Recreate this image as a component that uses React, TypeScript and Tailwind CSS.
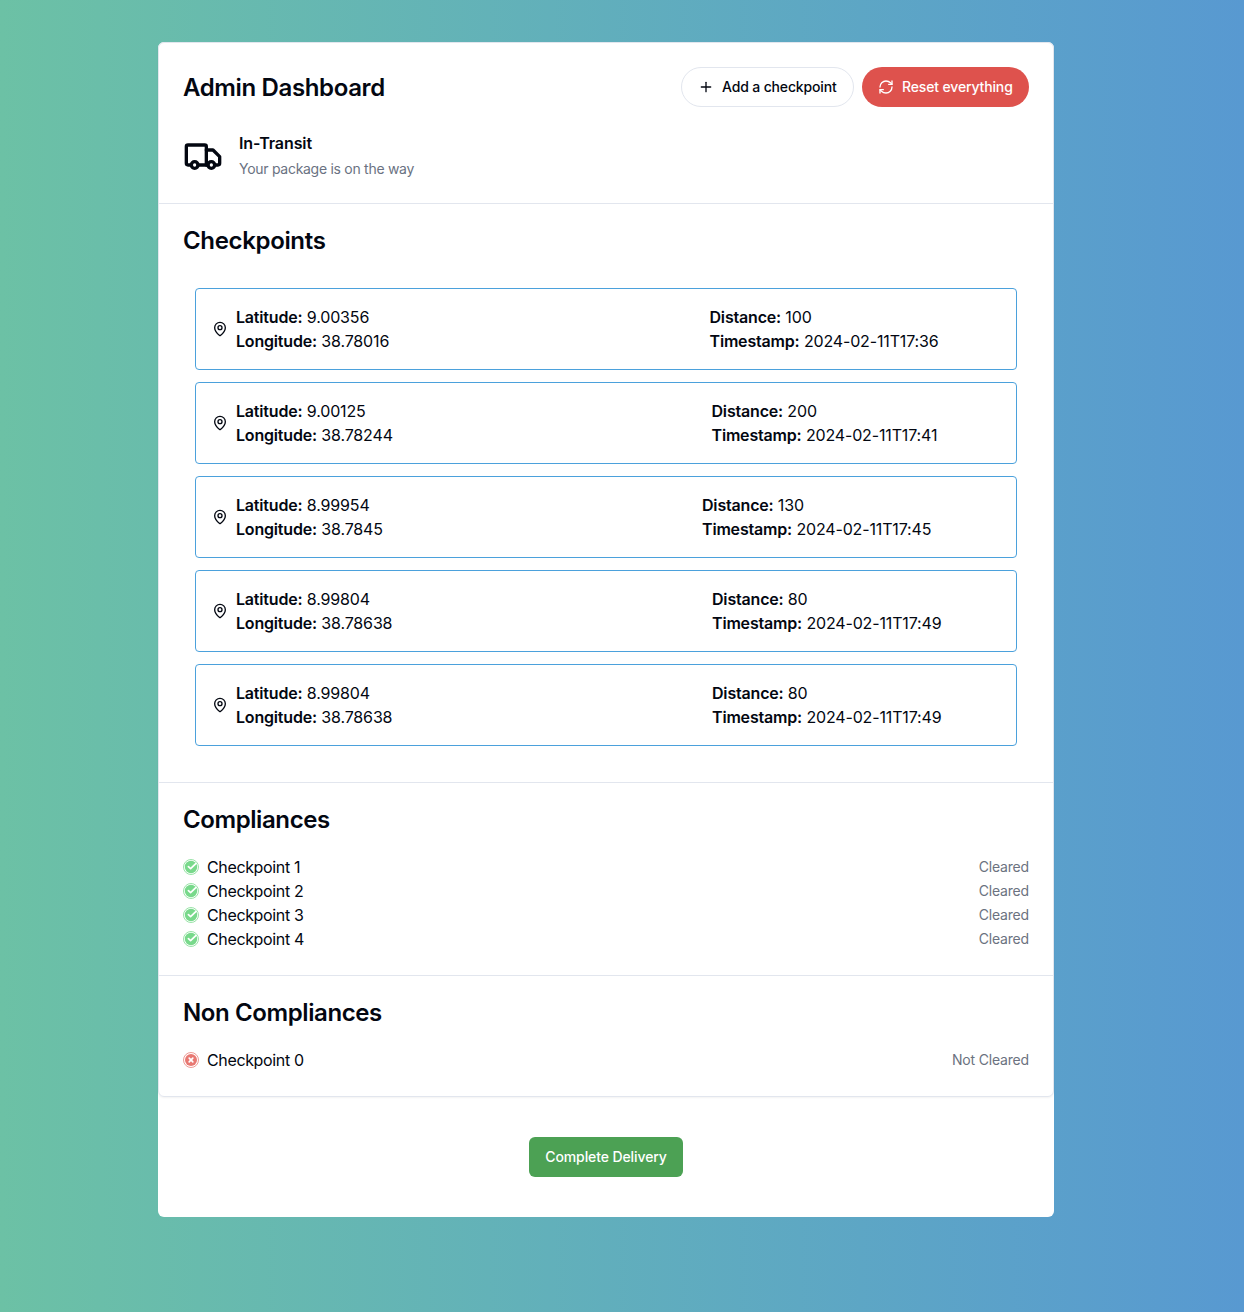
import { MapPin, Plus, RefreshCw } from "lucide-react";

const checkpoints = [
  { lat: "9.00356", lng: "38.78016", distance: "100", time: "2024-02-11T17:36", inset: "ml-[473.5px]" },
  { lat: "9.00125", lng: "38.78244", distance: "200", time: "2024-02-11T17:41", inset: "ml-[475.5px]" },
  { lat: "8.99954", lng: "38.7845", distance: "130", time: "2024-02-11T17:45", inset: "ml-[466px]" },
  { lat: "8.99804", lng: "38.78638", distance: "80", time: "2024-02-11T17:49", inset: "ml-[476px]" },
  { lat: "8.99804", lng: "38.78638", distance: "80", time: "2024-02-11T17:49", inset: "ml-[476px]" },
];

function TruckIcon() {
  return (
    <svg width="40" height="40" viewBox="0 0 24 24" fill="none" stroke="currentColor" strokeWidth="2" strokeLinecap="round" strokeLinejoin="round">
      <path d="M5 18H3c-.6 0-1-.4-1-1V7c0-.6.4-1 1-1h10c.6 0 1 .4 1 1v11" />
      <path d="M14 9h4l4 4v4c0 .6-.4 1-1 1h-2" />
      <circle cx="7" cy="18" r="2" />
      <path d="M15 18H9" />
      <circle cx="17" cy="18" r="2" />
    </svg>
  );
}

function StatusIcon({ ok }: { ok: boolean }) {
  return ok ? (
    <svg width="16" height="16" viewBox="0 0 16 16" fill="none">
      <circle cx="8" cy="8" r="7.5" stroke="#78d98b" strokeOpacity="0.75" />
      <circle cx="8" cy="8" r="6.2" fill="#78d98b" />
      <path d="M5.4 7.6l2.2 2L12.8 4.6" stroke="white" strokeWidth="1.7" strokeLinecap="round" strokeLinejoin="round" />
    </svg>
  ) : (
    <svg width="16" height="16" viewBox="0 0 16 16" fill="none">
      <circle cx="8" cy="8" r="7.5" stroke="#e87872" strokeOpacity="0.75" />
      <circle cx="8" cy="8" r="6" fill="#e87872" />
      <path d="M6.2 6.2l3.6 3.6M9.8 6.2l-3.6 3.6" stroke="white" strokeWidth="1.7" strokeLinecap="round" />
    </svg>
  );
}

function Row({ name, ok }: { name: string; ok: boolean }) {
  return (
    <div className="flex items-center gap-2">
      <StatusIcon ok={ok} />
      <span className="tracking-[-0.36px]">{name}</span>
      <span className="ml-auto text-sm tracking-[-0.18px] text-[#6b7280]">{ok ? "Cleared" : "Not Cleared"}</span>
    </div>
  );
}

function Field({ label, value }: { label: string; value: string }) {
  return (
    <p className="whitespace-nowrap tracking-[-0.15px]">
      <b className="font-semibold tracking-[-0.18px]">{label}:</b> {value}
    </p>
  );
}

export default function App() {
  return (
    <div className="h-[1312px] bg-linear-to-r from-[#6cc1a5] to-[#5899d1] pt-[42px] font-['Inter',sans-serif] text-[#030711]">
      <main className="ml-[158px] h-[1175px] w-[896px] rounded-md bg-white">
        <div className="rounded-md border border-[#e2e6ee] shadow-xs">
          <section className="h-[161px] border-b border-[#e2e6ee] px-6 pt-6">
            <div className="flex items-center justify-between">
              <h1 className="pt-0.5 text-2xl font-semibold tracking-[-0.36px]">Admin Dashboard</h1>
              <div className="flex gap-2 text-sm font-medium tracking-[-0.15px]">
                <button className="flex h-10 w-[173px] items-center rounded-full border border-[#e2e6ee] pl-4 whitespace-nowrap">
                  <Plus size={16} className="mr-2" />Add a checkpoint
                </button>
                <button className="flex h-10 w-[167px] items-center rounded-full bg-[#de524d] pl-4 whitespace-nowrap text-white">
                  <RefreshCw size={16} className="mr-2" />Reset everything
                </button>
              </div>
            </div>
            <div className="mt-6 flex items-center gap-4">
              <TruckIcon />
              <div>
                <h2 className="font-semibold tracking-[-0.09px]">In-Transit</h2>
                <p className="mt-1 text-sm tracking-[-0.28px] text-gray-500">Your package is on the way</p>
              </div>
            </div>
          </section>
          <section className="h-[579px] border-b border-[#e2e6ee] px-6 pt-[21px]">
            <h2 className="text-2xl font-semibold tracking-[-0.34px]">Checkpoints</h2>
            <div className="mt-[31px] flex flex-col gap-3 px-3">
              {checkpoints.map((c, i) => (
                <div key={i} className="flex h-[82px] items-center rounded-[4px] border border-[#4ba1dc] px-4">
                  <MapPin size={16} className="mr-2 shrink-0" />
                  <div className="w-0">
                    <Field label="Latitude" value={c.lat} />
                    <Field label="Longitude" value={c.lng} />
                  </div>
                  <div className={c.inset}>
                    <Field label="Distance" value={c.distance} />
                    <Field label="Timestamp" value={c.time} />
                  </div>
                </div>
              ))}
            </div>
          </section>
          <section className="h-[193px] border-b border-[#e2e6ee] px-6 pt-[21px]">
            <h2 className="mb-[19px] text-2xl font-semibold tracking-[-0.41px]">Compliances</h2>
            {[1, 2, 3, 4].map((n) => <Row key={n} name={`Checkpoint ${n}`} ok />)}
          </section>
          <section className="h-[120px] px-6 pt-[21px]">
            <h2 className="mb-[19px] text-2xl font-semibold tracking-[-0.4px]">Non Compliances</h2>
            <Row name="Checkpoint 0" ok={false} />
          </section>
        </div>
        <button className="mx-auto mt-10 flex h-10 w-[154px] items-center justify-center rounded-md bg-[#4ca154] text-sm font-medium tracking-[-0.1px] text-white">Complete Delivery</button>
      </main>
    </div>
  );
}
